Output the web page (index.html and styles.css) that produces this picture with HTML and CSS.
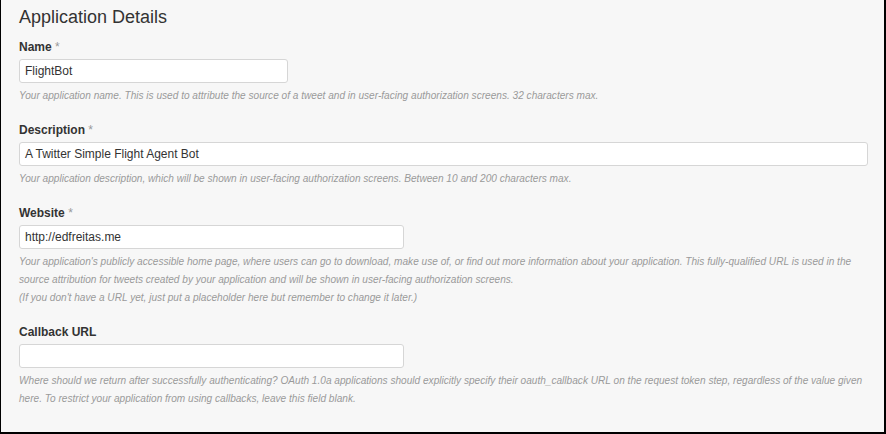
FILE: index.html
```html
<!DOCTYPE html>
<html>
<head>
<meta charset="utf-8">
<link rel="stylesheet" href="styles.css">
</head>
<body>
<div class="frame">
  <h2 class="title">Application Details</h2>
  <div class="field">
    <label class="label">Name <span class="req">*</span></label>
    <div class="input w-sm">FlightBot</div>
    <p class="help">Your application name. This is used to attribute the source of a tweet and in user-facing authorization screens. 32 characters max.</p>
  </div>
  <div class="field">
    <label class="label">Description <span class="req">*</span></label>
    <div class="input w-full">A Twitter Simple Flight Agent Bot</div>
    <p class="help">Your application description, which will be shown in user-facing authorization screens. Between 10 and 200 characters max.</p>
  </div>
  <div class="field">
    <label class="label">Website <span class="req">*</span></label>
    <div class="input w-md">http://edfreitas.me</div>
    <p class="help">Your application's publicly accessible home page, where users can go to download, make use of, or find out more information about your application. This fully-qualified URL is used in the source attribution for tweets created by your application and will be shown in user-facing authorization screens.<br>(If you don't have a URL yet, just put a placeholder here but remember to change it later.)</p>
  </div>
  <div class="field">
    <label class="label">Callback URL</label>
    <div class="input w-md"></div>
    <p class="help">Where should we return after successfully authenticating? OAuth 1.0a applications should explicitly specify their oauth_callback URL on the request token step, regardless of the value given here. To restrict your application from using callbacks, leave this field blank.</p>
  </div>
</div>
</body>
</html>
```
FILE: styles.css
```css
html, body {
  margin: 0;
  padding: 0;
  background: #ffffff;
}
body {
  font-family: "Liberation Sans", Arial, sans-serif;
  color: #333;
}
.frame {
  box-sizing: border-box;
  width: 886px;
  height: 434px;
  background: #f7f7f7;
  border-left: 1px solid #000;
  border-right: 2px solid #000;
  border-bottom: 2px solid #000;
  padding: 5px 16px 0 18px;
  overflow: hidden;
}
.title {
  margin: 0 0 10px 0;
  font-size: 18px;
  font-weight: normal;
  color: #333;
  line-height: 24px;
}
.field {
  margin-bottom: 17px;
}
.label {
  display: block;
  font-size: 12px;
  font-weight: bold;
  color: #333;
  line-height: 16px;
  margin-bottom: 4px;
}
.req {
  font-weight: normal;
  color: #999;
}
.input {
  box-sizing: border-box;
  height: 24px;
  background: #fff;
  border: 1px solid #d6d6d6;
  border-radius: 3px;
  padding: 0 5px;
  font-size: 12px;
  line-height: 22px;
  color: #333;
}
.w-sm { width: 269px; }
.w-md { width: 385px; }
.w-full { width: 849px; }
.help {
  margin: 4px 0 0 0;
  font-size: 10.1px;
  font-style: italic;
  color: #9a9a9a;
  line-height: 18px;
}
```
